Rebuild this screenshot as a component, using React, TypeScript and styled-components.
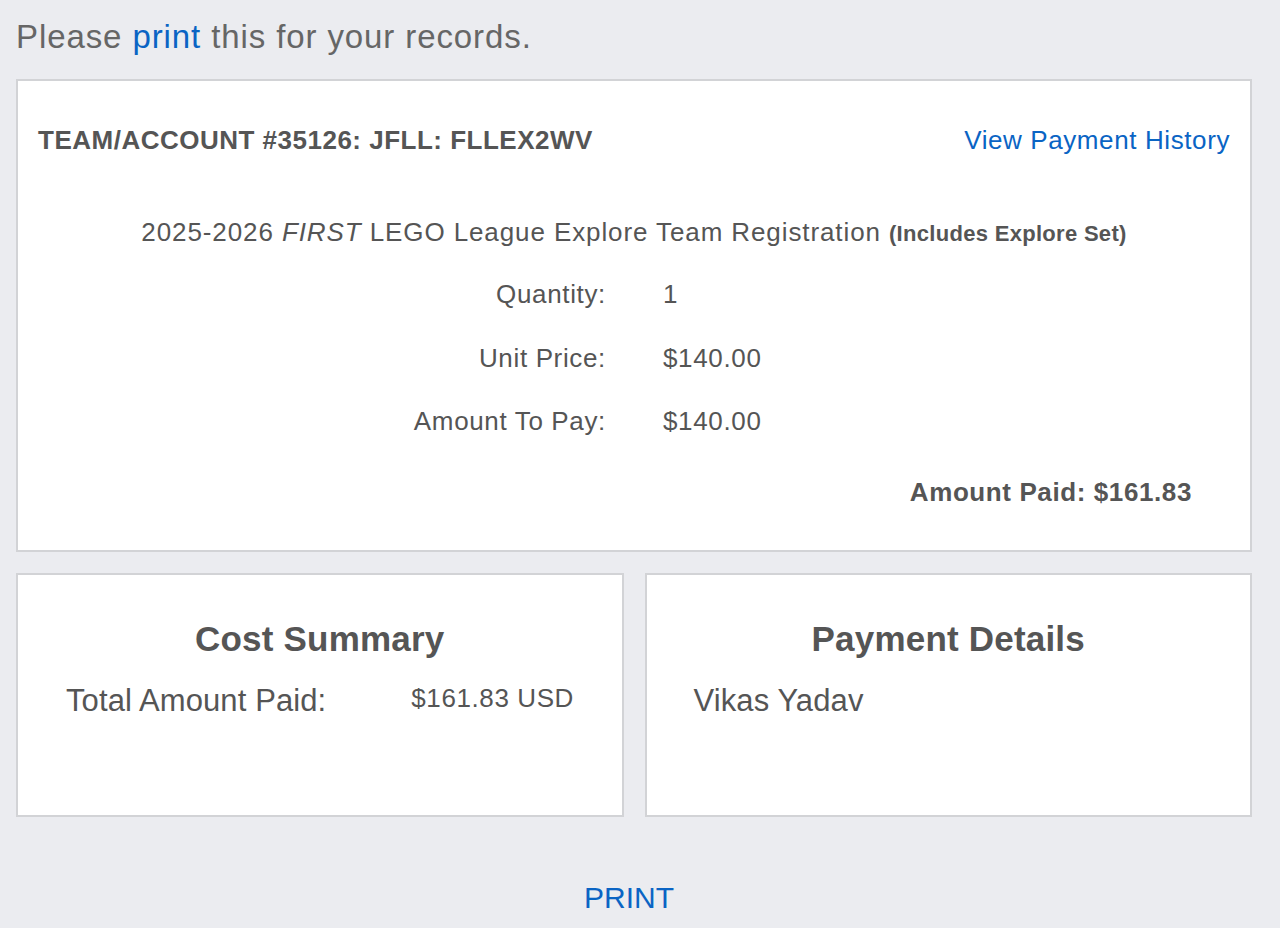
import React from "react";
import styled, { createGlobalStyle } from "styled-components";

const Global = createGlobalStyle`
  html, body { margin: 0; padding: 0; background: #ebecf0; }
  body { font-family: "Liberation Sans", Arial, sans-serif; color: #555; }
`;

const Page = styled.div`
  padding: 14px 28px 0 16px;
  display: flex;
  flex-direction: column;
`;

const Intro = styled.p`
  margin: 0 0 19px;
  font-size: 33px;
  line-height: 46px;
  color: #666;
  letter-spacing: 0.9px;
`;

const Link = styled.a<{ $size?: number; $ls?: number }>`
  color: #0a64c4;
  text-decoration: none;
  cursor: pointer;
  ${(p) => (p.$size ? `font-size: ${p.$size}px;` : "")}
  ${(p) => (p.$ls !== undefined ? `letter-spacing: ${p.$ls}px;` : "")}
`;

const Card = styled.section`
  background: #fff;
  border: 2px solid #d2d3d6;
  box-sizing: border-box;
`;

const MainCard = styled(Card)`
  height: 473px;
  padding: 39px 20px 0 20px;
  display: flex;
  flex-direction: column;
`;

const HeaderRow = styled.div`
  display: flex;
  justify-content: space-between;
  align-items: center;
  height: 40px;
`;

const TeamTitle = styled.h2`
  margin: 0;
  font-size: 26px;
  font-weight: 700;
  color: #555;
  letter-spacing: 0.5px;
`;

const Product = styled.div`
  margin-top: 57px;
  text-align: center;
  font-size: 26px;
  color: #555;
  letter-spacing: 0.9px;
`;

const Small = styled.span`
  font-size: 22px;
  font-weight: 700;
  letter-spacing: 0.3px;
`;

const Rows = styled.div`
  margin-top: 28px;
  display: grid;
  grid-template-columns: 568px 1fr;
  column-gap: 57px;
  row-gap: 27.5px;
  font-size: 26px;
  line-height: 36px;
  letter-spacing: 0.65px;
`;

const Label = styled.div`
  text-align: right;
`;

const Value = styled.div``;

const Paid = styled.div`
  margin-top: 38px;
  padding-right: 38px;
  text-align: right;
  font-size: 26px;
  font-weight: 700;
  letter-spacing: 0.6px;
`;

const Bottom = styled.div`
  margin-top: 21px;
  display: grid;
  grid-template-columns: 1fr 1fr;
  column-gap: 21px;
`;

const SubCard = styled(Card)`
  height: 244px;
  padding: 42px 0 0;
`;

const SubTitle = styled.h3`
  margin: 0;
  text-align: center;
  font-size: 35px;
  line-height: 44px;
  font-weight: 700;
  color: #555;
  letter-spacing: 0.2px;
`;

const SummaryRow = styled.div`
  margin-top: 22px;
  display: flex;
  align-items: baseline;
  padding-left: 48px;
`;

const BigText = styled.span`
  font-size: 31px;
  letter-spacing: 0.1px;
`;

const Money = styled.span`
  margin-left: 85px;
  font-size: 26px;
  letter-spacing: 0.6px;
  position: relative;
  top: -4px;
`;

const NameRow = styled.div`
  margin-top: 22px;
  padding-left: 47px;
`;

const Footer = styled.div`
  margin-top: 64px;
  text-align: center;
  padding-right: 10px;
`;

export default function App() {
  return (
    <>
      <Global />
      <Page>
        <Intro>
          Please <Link>print</Link> this for your records.
        </Intro>
        <MainCard>
          <HeaderRow>
            <TeamTitle>TEAM/ACCOUNT #35126: JFLL: FLLEX2WV</TeamTitle>
            <Link $size={26} $ls={0.6}>
              View Payment History
            </Link>
          </HeaderRow>
          <Product>
            2025-2026 <i>FIRST</i> LEGO League Explore Team Registration{" "}
            <Small>(Includes Explore Set)</Small>
          </Product>
          <Rows>
            <Label>Quantity:</Label>
            <Value>1</Value>
            <Label>Unit Price:</Label>
            <Value>$140.00</Value>
            <Label>Amount To Pay:</Label>
            <Value>$140.00</Value>
          </Rows>
          <Paid>Amount Paid: $161.83</Paid>
        </MainCard>
        <Bottom>
          <SubCard>
            <SubTitle>Cost Summary</SubTitle>
            <SummaryRow>
              <BigText>Total Amount Paid:</BigText>
              <Money>$161.83 USD</Money>
            </SummaryRow>
          </SubCard>
          <SubCard>
            <SubTitle>Payment Details</SubTitle>
            <NameRow>
              <BigText>Vikas Yadav</BigText>
            </NameRow>
          </SubCard>
        </Bottom>
        <Footer>
          <Link $size={30}>PRINT</Link>
        </Footer>
      </Page>
    </>
  );
}
